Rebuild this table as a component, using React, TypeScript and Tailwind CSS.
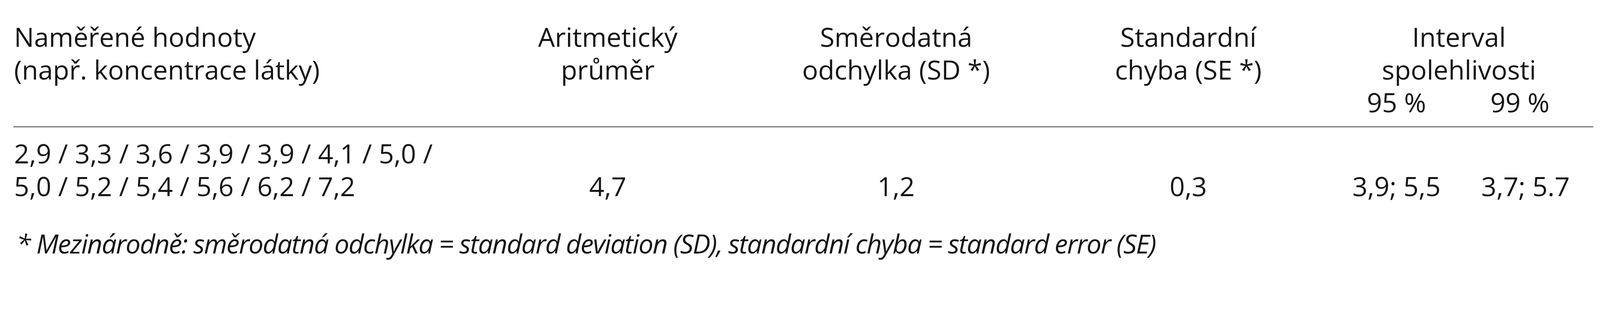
import React from 'react';

const cols = 'grid grid-cols-[1216px_612px_864px_632px_434px_198px]';

const App = () => {
    return (
        <div className="w-full min-h-screen bg-white text-[#141414] font-['Open_Sans',sans-serif] text-[68px] leading-[84px]">
            <div className="ml-[34px] w-[4045px] pt-[52px]">

                {/* Záhlaví tabulky */}
                <div className={`${cols} pb-[19px] border-b-[4px] border-[#959595]`}>
                    <div className="pl-[2px]">
                        <div>Naměřené hodnoty</div>
                        <div>(např. koncentrace látky)</div>
                    </div>
                    <div className="text-center">
                        <div>Aritmetický</div>
                        <div>průměr</div>
                    </div>
                    <div className="text-center">
                        <div>Směrodatná</div>
                        <div>odchylka (SD *)</div>
                    </div>
                    <div className="text-center">
                        <div>Standardní</div>
                        <div>chyba (SE *)</div>
                    </div>
                    <div className="col-span-2 grid grid-cols-[434px_198px]">
                        <div className="col-span-2 pl-[122px] text-center">
                            <div>Interval</div>
                            <div>spolehlivosti</div>
                        </div>
                        <div className="text-center">95 %</div>
                        <div className="text-center">99 %</div>
                    </div>
                </div>

                {/* Hodnoty */}
                <div className={`${cols} items-end pt-[24px]`}>
                    <div className="pl-[2px]">
                        <div>2,9 / 3,3 / 3,6 / 3,9 / 3,9 / 4,1 / 5,0 /</div>
                        <div>5,0 / 5,2 / 5,4 / 5,6 / 6,2 / 7,2</div>
                    </div>
                    <div className="text-center">4,7</div>
                    <div className="text-center">1,2</div>
                    <div className="text-center">0,3</div>
                    <div className="text-center whitespace-nowrap">3,9; 5,5</div>
                    <div className="text-center whitespace-nowrap">3,7; 5.7</div>
                </div>

                {/* Poznámka */}
                <p className="pt-[63px] pl-[8px] italic tracking-[-2px]">
                    * Mezinárodně: směrodatná odchylka = standard deviation (SD), standardní chyba = standard error (SE)
                </p>
            </div>
        </div>
    );
};

export default App;
